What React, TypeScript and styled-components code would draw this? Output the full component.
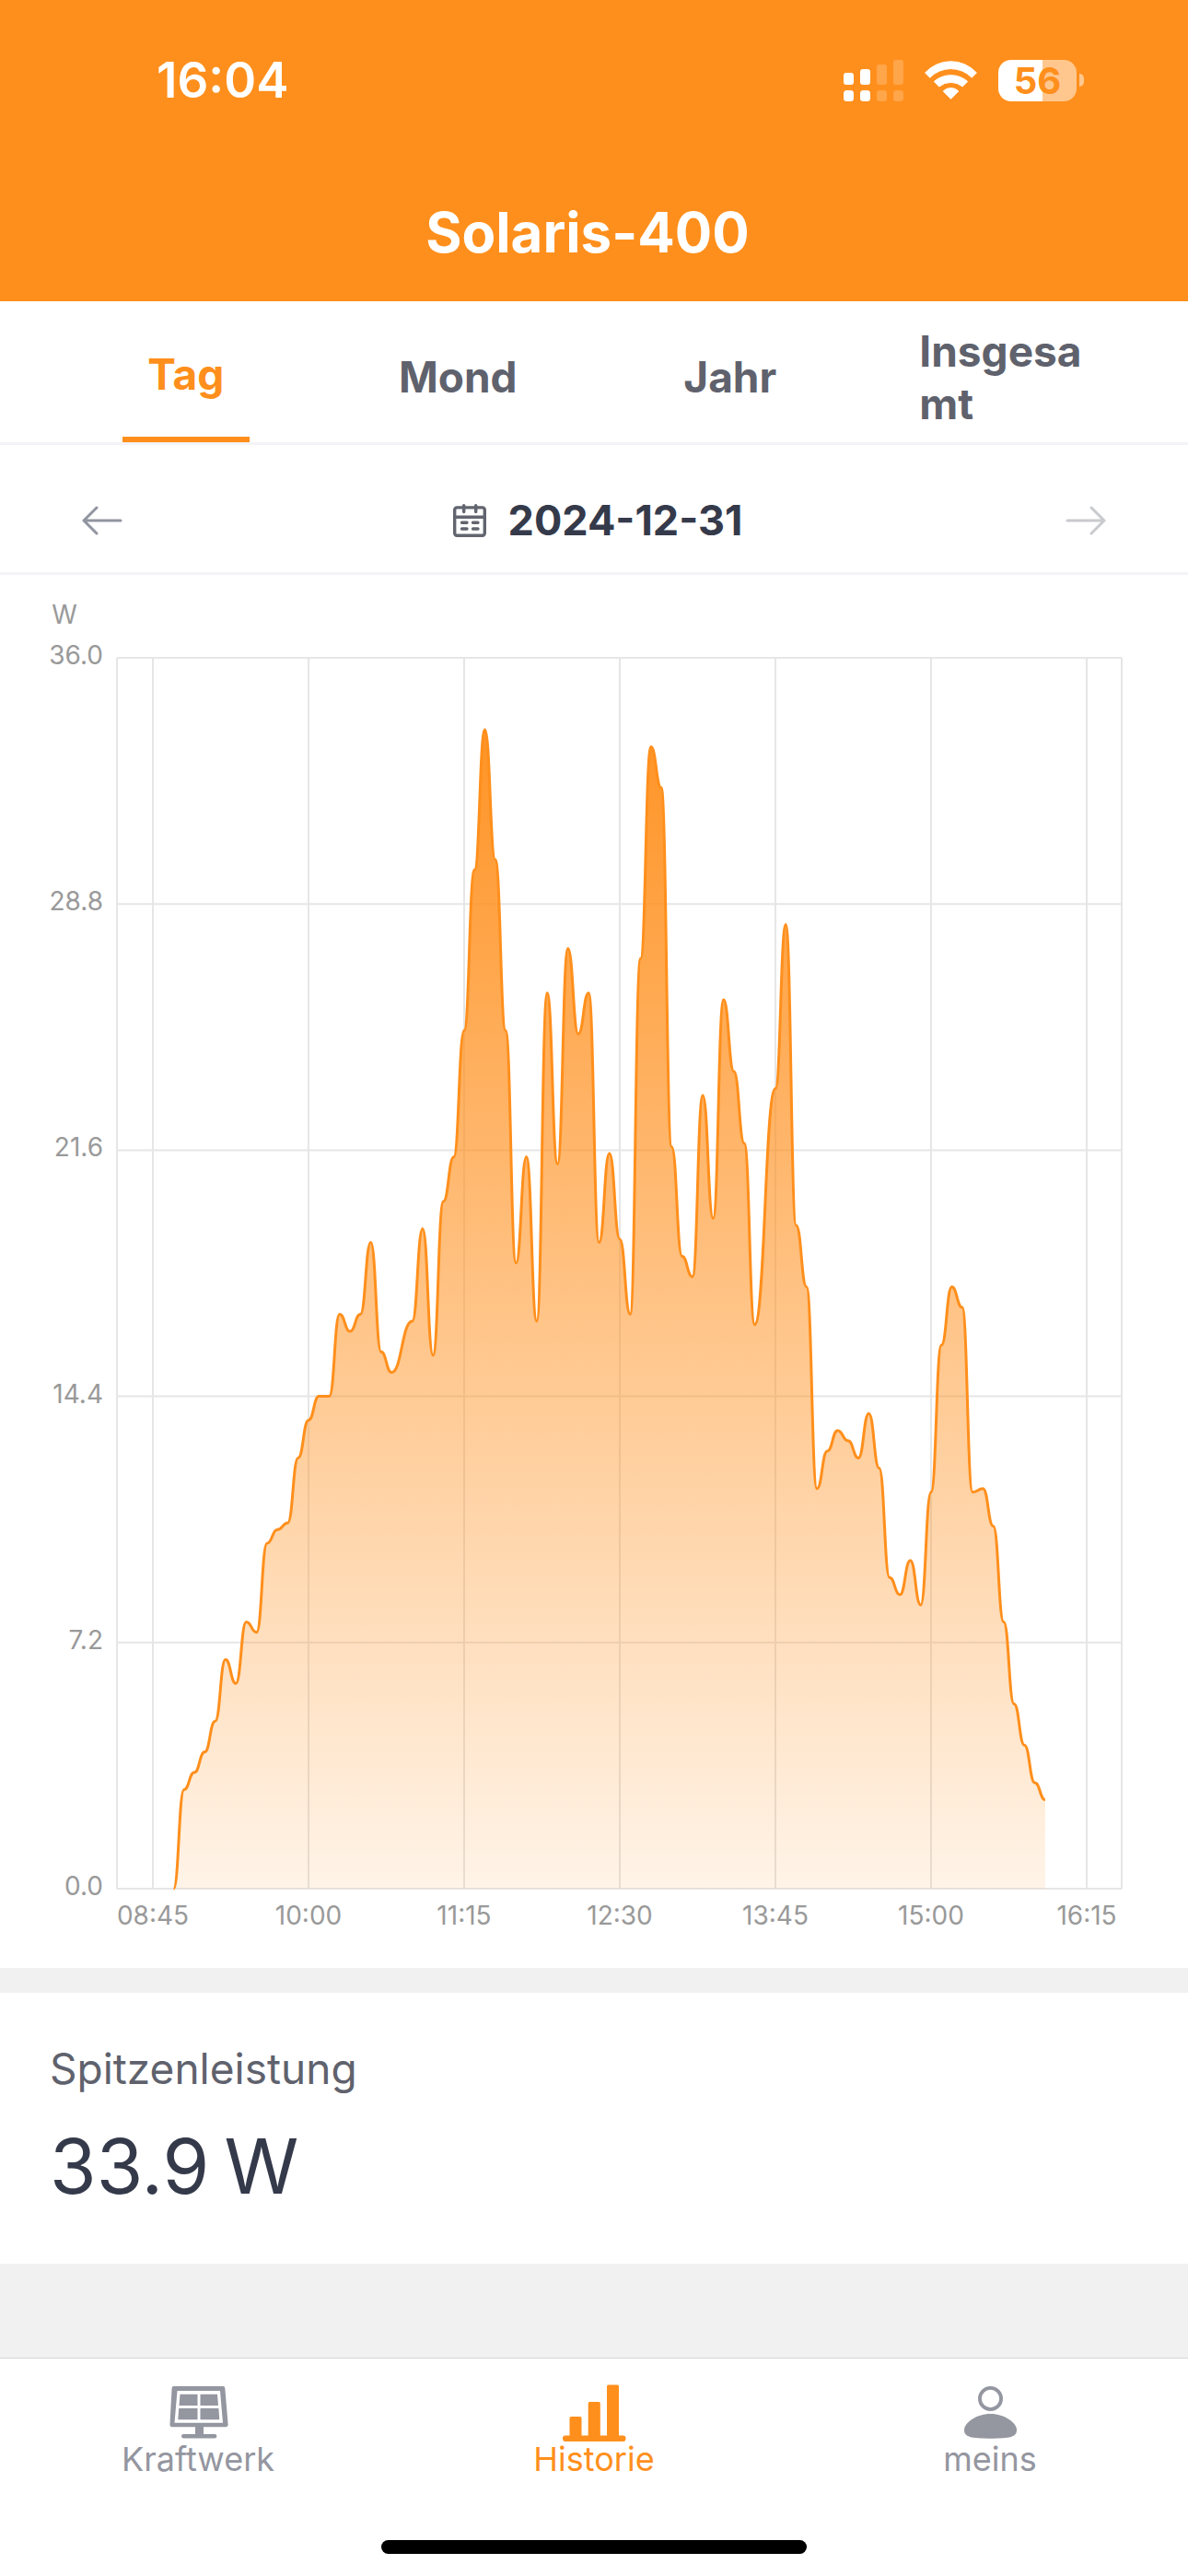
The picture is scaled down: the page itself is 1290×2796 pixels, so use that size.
import React, { useState } from 'react';
import styled, { createGlobalStyle } from 'styled-components';

const ORANGE = '#ff8f1c';
const INK = '#353a4b';
const SLATE = '#5f626d';
const MUTED = '#9496a0';

const GlobalStyle = createGlobalStyle`
  *, *::before, *::after { box-sizing: border-box; }
  html, body { margin: 0; padding: 0; }
  body {
    background: #f1f1f1;
    font-family: Inter, Roboto, "Liberation Sans", sans-serif;
  }
  button { font: inherit; color: inherit; background: none; border: 0; padding: 0; margin: 0; cursor: pointer; }
`;

const Screen = styled.div`
  display: flex;
  flex-direction: column;
  min-height: 100vh;
  background: #f1f1f1;
`;

const Header = styled.header`
  background: ${ORANGE};
  color: #fff;
`;

const StatusBar = styled.div`
  display: flex;
  align-items: center;
  justify-content: space-between;
  height: 174px;
  padding: 0 113px 0 170px;
`;

const Clock = styled.time`
  font-size: 53px;
  line-height: 64px;
  font-weight: 600;
`;

const StatusIcons = styled.div`
  display: flex;
  align-items: center;
  gap: 23px;
`;

const Battery = styled.div`
  display: flex;
  align-items: center;
  gap: 3px;
`;

const BatteryBody = styled.div<{ $level: number }>`
  display: flex;
  align-items: center;
  justify-content: center;
  width: 85px;
  height: 45px;
  border-radius: 14px;
  background: linear-gradient(
    to right,
    #fff ${(p) => p.$level}%,
    rgba(255, 255, 255, 0.5) ${(p) => p.$level}%
  );
  color: ${ORANGE};
  font-size: 40px;
  line-height: 45px;
  font-weight: 700;
`;

const BatteryCap = styled.div`
  width: 5px;
  height: 14px;
  border-radius: 0 5px 5px 0;
  background: rgba(255, 255, 255, 0.5);
`;

const Title = styled.h1`
  margin: 0;
  padding: 40px 14px 37px 0;
  font-size: 60px;
  line-height: 76px;
  font-weight: 700;
  text-align: center;
`;

const Tabs = styled.nav`
  display: grid;
  grid-template-columns: repeat(4, 1fr);
  height: 156px;
  padding: 0 54px;
  background: #fff;
  border-bottom: 3px solid #f3f3f8;
`;

const Tab = styled.button<{ $active: boolean }>`
  justify-self: center;
  display: flex;
  align-items: center;
  justify-content: center;
  min-width: 138px;
  max-width: 180px;
  padding-top: 12px;
  border-bottom: ${(p) => (p.$active ? `6px solid ${ORANGE}` : '0')};
  color: ${(p) => (p.$active ? ORANGE : SLATE)};
  font-size: 46px;
  line-height: 57px;
  font-weight: 700;
  text-align: left;
`;

const TabLabel = styled.span`
  min-width: 0;
  overflow-wrap: anywhere;
`;

const DateRow = styled.div`
  display: flex;
  align-items: center;
  justify-content: space-between;
  height: 141px;
  padding: 26px 89px 0;
  background: #fff;
  border-bottom: 3px solid #f3f3f8;
`;

const ArrowButton = styled.button`
  display: flex;
  color: #9195a0;
  &:disabled { color: #c9cace; cursor: default; }
`;

const DateButton = styled.button`
  display: flex;
  align-items: center;
  gap: 24px;
  padding-left: 8px;
  color: ${INK};
  font-size: 45px;
  line-height: 54px;
  font-weight: 700;
`;

const ChartPanel = styled.section`
  background: #fff;
`;

const ChartSvg = styled.svg`
  display: block;
  width: 100%;
  height: auto;
`;

const AxisText = styled.text`
  fill: #999;
  font-size: 28px;
`;

const Peak = styled.section`
  margin-top: 27px;
  padding: 52px 54px 55px;
  background: #fff;
`;

const PeakLabel = styled.h2`
  margin: 0 0 27px;
  color: ${SLATE};
  font-size: 46px;
  line-height: 60px;
  font-weight: 400;
`;

const PeakValue = styled.p`
  display: flex;
  gap: 16px;
  margin: 0;
  color: ${INK};
  font-size: 82px;
  line-height: 100px;
`;

const Footer = styled.footer`
  margin-top: auto;
  padding: 28px 0 24px;
  background: #fff;
  border-top: 1px solid #d5d5d5;
`;

const BottomNav = styled.nav`
  display: grid;
  grid-template-columns: repeat(3, 1fr);
`;

const NavItem = styled.a<{ $active?: boolean }>`
  display: flex;
  flex-direction: column;
  align-items: center;
  color: ${(p) => (p.$active ? ORANGE : MUTED)};
  font-size: 36px;
  line-height: 38px;
  text-decoration: none;
`;

const HomeIndicator = styled.div`
  width: 462px;
  height: 15px;
  margin: 69px auto 0;
  border-radius: 8px;
  background: #000;
`;

const SignalIcon = () => (
  <svg width="65" height="45" viewBox="0 0 65 45" fill="#fff" aria-hidden="true">
    {[14, 10, 5, 0].map((top, i) => (
      <g key={top} opacity={i < 2 ? 1 : 0.2}>
        <rect x={i * 18} y={top} width="11" height={27 - top} rx="3" />
        <rect x={i * 18} y="33" width="11" height="12" rx="3.5" />
      </g>
    ))}
  </svg>
);

const WifiIcon = () => (
  <svg width="57" height="42" viewBox="0 0 57 42" fill="#fff" stroke="#fff" strokeWidth="1" strokeLinejoin="round" aria-hidden="true">
    <path d="M.6 13A37.8 37.8 0 0 1 56.4 13L51.2 18.2A31.6 31.6 0 0 0 5.8 18.2Z" />
    <path d="M10.3 22.5A27.6 27.6 0 0 1 46.7 22.5L41.2 28A19.8 19.8 0 0 0 15.8 28Z" />
    <path d="M20.2 33A11.7 11.7 0 0 1 36.8 33L28.5 41.3Z" />
  </svg>
);

const ArrowIcon = ({ flip }: { flip?: boolean }) => (
  <svg width="44" height="32" viewBox="0 0 44 32" fill="none" stroke="currentColor" strokeWidth="3" strokeLinecap="round" strokeLinejoin="round" aria-hidden="true">
    <path d={flip ? 'M2 16H42M28 2L42 16L28 30' : 'M42 16H2M16 2L2 16L16 30'} />
  </svg>
);

const CalendarIcon = () => (
  <svg width="36" height="36" viewBox="0 0 36 36" fill="none" stroke="#62656f" strokeWidth="3.4" strokeLinecap="round" aria-hidden="true">
    <rect x="1.7" y="3.9" width="32.6" height="30.4" rx="2.5" />
    <path d="M2 14.3H34M11.7 1.7V8.5M24.7 1.7V8.5" />
    <path d="M9.5 20.3H15M21.5 20.3H27M9.5 27H15M21.5 27H27" />
  </svg>
);

const PanelIcon = () => (
  <svg width="72" height="62" viewBox="0 0 72 62" fill="currentColor" aria-hidden="true">
    <path fillRule="evenodd" d="M9.6 2H63.2Q65.2 2 65.3 4L68.6 43.5Q68.7 46.3 66 46.3H42V54H54Q56.4 54 56.4 56.3T54 58.6H20.3Q18 58.6 18 56.3T20.3 54H33V46.3H8Q5.3 46.3 5.5 43.5L7.6 4Q7.7 2 9.6 2ZM13.5 7L10.5 41.7H63L60 7Z" />
    <path d="M16.5 10.8H35.5V23H15.5ZM38.5 10.8H57L58 23H38.5ZM15.2 26H35.5V38.3H14.3ZM38.5 26H58.4L59.3 38.3H38.5Z" />
  </svg>
);

const BarsIcon = () => (
  <svg width="72" height="62" viewBox="0 0 72 62" fill="currentColor" aria-hidden="true">
    <rect x="2" y="55.5" width="68.5" height="6.5" rx="3" />
    <path d="M9.5 58V36.5Q9.5 35 11 35H21Q22.5 35 22.5 36.5V58ZM29.7 58V20.5Q29.7 19 31.2 19H41.3Q42.8 19 42.8 20.5V58ZM50 58V2Q50 .5 51.5 .5H61.5Q63 .5 63 2V58Z" />
  </svg>
);

const PersonIcon = () => (
  <svg width="72" height="62" viewBox="0 0 72 62" fill="currentColor" aria-hidden="true">
    <circle cx="36.5" cy="15.5" r="11.6" fill="none" stroke="currentColor" strokeWidth="3.8" />
    <path d="M36.5 32C52 32 65 42 65 49.500C65 57 58 58.7 36.5 58.7S8 57 8 49.5C8 42 21 32 36.5 32Z" />
  </svg>
);

/* Power in watts, one reading every five minutes from 08:55; null marks a missed reading. */
const READINGS: (number | null)[] = [
  0, 2.9, 3.4, 4.0, 4.9, 6.7, 6.0, 7.8, 7.5, 10.1, 10.5, 10.7, 12.6, 13.7, 14.4, 14.4, 16.8, 16.3,
  16.8, 18.9, 15.7, 15.1, null, 16.6, 19.3, 15.6, 20.1, 21.4, 25.1, 29.8, 33.9, 30.1, 25.1, 18.3,
  21.4, 16.6, 26.2, 21.2, 27.5, 25.0, 26.2, 18.9, 21.5, 19.0, 16.8, 27.2, 33.4, 32.2, 21.7, 18.5,
  17.9, 23.2, 19.6, 26.0, 23.9, 21.8, 16.5, null, 23.4, 28.2, 19.4, 17.6, 11.7, 12.8, 13.4, 13.1,
  12.6, 13.9, 12.3, 9.1, 8.6, 9.6, 8.3, 11.6, 15.9, 17.6, 17.0, 11.6, 11.7, 10.6, 7.8, 5.4, 4.2,
  3.1, 2.6,
];

const PLOT = { left: 127, right: 1218, top: 90, bottom: 1426, firstTick: 166, tickStep: 169 };
const MAX_WATTS = 36;
const Y_TICKS = [36, 28.8, 21.6, 14.4, 7.2, 0];
const X_TICKS = ['08:45', '10:00', '11:15', '12:30', '13:45', '15:00', '16:15'];

const toX = (slot: number) => PLOT.firstTick + (slot * PLOT.tickStep) / 15;
const toY = (watts: number) => PLOT.bottom - (watts / MAX_WATTS) * (PLOT.bottom - PLOT.top);

const points = READINGS.flatMap((watts, i) => (watts === null ? [] : [{ x: toX(i + 2), y: toY(watts) }]));

const linePath = points.reduce((d, p, i) => {
  if (i === 0) return `M${p.x} ${p.y}`;
  const prev = points[i - 1];
  const mid = (prev.x + p.x) / 2;
  return `${d}C${mid} ${prev.y} ${mid} ${p.y} ${p.x} ${p.y}`;
}, '');
const areaPath = `${linePath}V${PLOT.bottom}H${points[0].x}Z`;

const PowerChart = () => (
  <ChartSvg viewBox="0 0 1290 1512" role="img" aria-label="Leistung in Watt">
    <defs>
      <linearGradient id="area" x1="0" y1="0" x2="0" y2="1">
        <stop offset="0" stopColor={ORANGE} stopOpacity="0.96" />
        <stop offset="1" stopColor={ORANGE} stopOpacity="0.1" />
      </linearGradient>
    </defs>
    <g stroke="#e6e6e6" strokeWidth="2">
      {Y_TICKS.map((v) => (
        <line key={v} x1={PLOT.left} x2={PLOT.right} y1={toY(v)} y2={toY(v)} />
      ))}
      {X_TICKS.map((t, i) => (
        <line key={t} x1={toX(i * 15)} x2={toX(i * 15)} y1={PLOT.top} y2={PLOT.bottom} />
      ))}
      <line x1={PLOT.left} x2={PLOT.left} y1={PLOT.top} y2={PLOT.bottom} />
      <line x1={PLOT.right} x2={PLOT.right} y1={PLOT.top} y2={PLOT.bottom} />
    </g>
    <path d={areaPath} fill="url(#area)" />
    <path d={linePath} fill="none" stroke={ORANGE} strokeWidth="3" strokeLinejoin="round" />
    <AxisText x="70" y="53" textAnchor="middle">W</AxisText>
    {Y_TICKS.map((v) => (
      <AxisText key={v} x="112" y={toY(v) + 7} textAnchor="end">{v.toFixed(1)}</AxisText>
    ))}
    {X_TICKS.map((t, i) => (
      <AxisText key={t} x={toX(i * 15)} y="1465" textAnchor="middle">{t}</AxisText>
    ))}
  </ChartSvg>
);

const RANGES = ['Tag', 'Mond', 'Jahr', 'Insgesamt'];

export default function App() {
  const [range, setRange] = useState('Tag');
  return (
    <>
      <GlobalStyle />
      <Screen>
        <Header>
          <StatusBar>
            <Clock>16:04</Clock>
            <StatusIcons>
              <SignalIcon />
              <WifiIcon />
              <Battery>
                <BatteryBody $level={56}>56</BatteryBody>
                <BatteryCap />
              </Battery>
            </StatusIcons>
          </StatusBar>
          <Title>Solaris-400</Title>
        </Header>
        <Tabs>
          {RANGES.map((r) => (
            <Tab key={r} type="button" $active={r === range} onClick={() => setRange(r)}>
              <TabLabel>{r}</TabLabel>
            </Tab>
          ))}
        </Tabs>
        <DateRow>
          <ArrowButton type="button" aria-label="Vorheriger Tag"><ArrowIcon /></ArrowButton>
          <DateButton type="button">
            <CalendarIcon />
            2024-12-31
          </DateButton>
          <ArrowButton type="button" aria-label="Nächster Tag" disabled><ArrowIcon flip /></ArrowButton>
        </DateRow>
        <ChartPanel><PowerChart /></ChartPanel>
        <Peak>
          <PeakLabel>Spitzenleistung</PeakLabel>
          <PeakValue><span>33.9</span> <span>W</span></PeakValue>
        </Peak>
        <Footer>
          <BottomNav>
            <NavItem href="#kraftwerk"><PanelIcon />Kraftwerk</NavItem>
            <NavItem href="#historie" $active aria-current="page"><BarsIcon />Historie</NavItem>
            <NavItem href="#meins"><PersonIcon />meins</NavItem>
          </BottomNav>
          <HomeIndicator />
        </Footer>
      </Screen>
    </>
  );
}
